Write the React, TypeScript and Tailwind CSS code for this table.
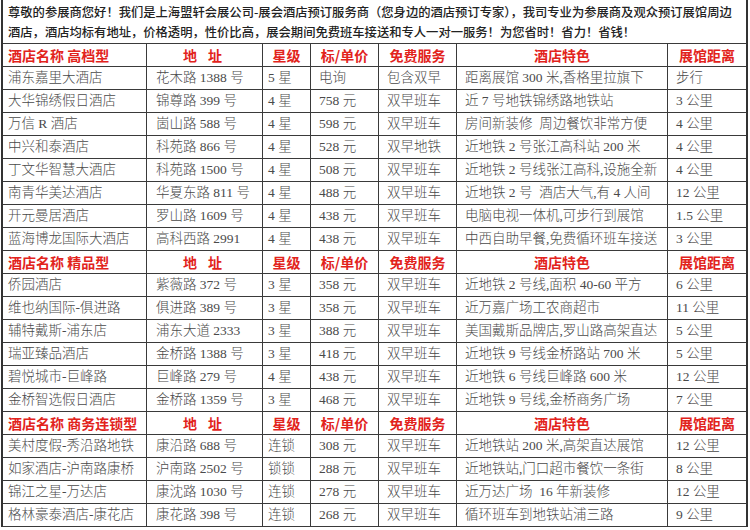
import React from "react";

type Row = [string, string, string, string, string, string, string];

const sections: { title: string; rows: Row[] }[] = [
  {
    title: "酒店名称 高档型",
    rows: [
      ["浦东嘉里大酒店", "花木路 1388 号", "5 星", "电询", "包含双早", "距离展馆 300 米,香格里拉旗下", "步行"],
      ["大华锦绣假日酒店", "锦尊路 399 号", "4 星", "758 元", "双早班车", "近 7 号地铁锦绣路地铁站", "3 公里"],
      ["万信 R 酒店", "崮山路 588 号", "4 星", "598 元", "双早班车", "房间新装修  周边餐饮非常方便", "4 公里"],
      ["中兴和泰酒店", "科苑路 866 号", "4 星", "528 元", "双早地铁", "近地铁 2 号张江高科站 200 米", "4 公里"],
      ["丁文华智慧大酒店", "科苑路 1500 号", "4 星", "508 元", "双早班车", "近地铁 2 号线张江高科,设施全新", "4 公里"],
      ["南青华美达酒店", "华夏东路 811 号", "4 星", "488 元", "双早班车", "近地铁 2 号  酒店大气,有 4 人间", "12 公里"],
      ["开元曼居酒店", "罗山路 1609 号", "4 星", "438 元", "双早班车", "电脑电视一体机,可步行到展馆", "1.5 公里"],
      ["蓝海博龙国际大酒店", "高科西路 2991", "4 星", "438 元", "双早班车", "中西自助早餐,免费循环班车接送", "3 公里"],
    ],
  },
  {
    title: "酒店名称 精品型",
    rows: [
      ["侨园酒店", "紫薇路 372 号", "3 星", "358 元", "双早班车", "近地铁 2 号线,面积 40-60 平方", "6 公里"],
      ["维也纳国际-俱进路", "俱进路 389 号", "3 星", "358 元", "双早班车", "近万嘉广场工农商超市", "11 公里"],
      ["辅特戴斯-浦东店", "浦东大道 2333", "3 星", "388 元", "双早班车", "美国戴斯品牌店,罗山路高架直达", "5 公里"],
      ["瑞亚臻品酒店", "金桥路 1388 号", "3 星", "418 元", "双早班车", "近地铁 9 号线金桥路站 700 米", "5 公里"],
      ["碧悦城市-巨峰路", "巨峰路 279 号", "4 星", "438 元", "双早班车", "近地铁 6 号线巨峰路 600 米", "12 公里"],
      ["金桥智选假日酒店", "金桥路 1359 号", "3 星", "468 元", "双早班车", "近地铁 9 号线,金桥商务广场", "7 公里"],
    ],
  },
  {
    title: "酒店名称 商务连锁型",
    rows: [
      ["美村度假-秀沿路地铁", "康沿路 688 号", "连锁", "308 元", "双早班车", "近地铁站 200 米,高架直达展馆", "12 公里"],
      ["如家酒店-沪南路康桥", "沪南路 2502 号", "锁锁", "288 元", "双早班车", "近地铁站,门口超市餐饮一条街", "8 公里"],
      ["锦江之星-万达店", "康沈路 1030 号", "连锁", "278 元", "双早班车", "近万达广场  16 年新装修", "12 公里"],
      ["格林豪泰酒店-康花店", "康花路 398 号", "连锁", "268 元", "双早班车", "循环班车到地铁站浦三路", "9 公里"],
    ],
  },
];

const dataFont = { fontFamily: '"Liberation Serif", "Noto Sans CJK SC", serif' };

const cellBase = "h-[23px] border-b border-[#3a3a3a] flex items-center overflow-hidden whitespace-pre";
const dataPads = ["pl-[5px]", "pl-[9px]", "pl-[5px]", "pl-[8px]", "pl-[8px]", "pl-[8px]", "pl-[8px]"];

function HeaderRow({ title }: { title: string }) {
  const red = "text-[#e2231c] font-bold text-[14px] [font-family:'Noto_Sans_CJK_SC',sans-serif]";
  return (
    <>
      <div className={`${cellBase} border-r ${red} pl-[5px]`}>{title}</div>
      <div className={`${cellBase} border-r ${red} justify-center gap-[11px] pr-[4px]`}>
        <span>地</span>
        <span>址</span>
      </div>
      <div className={`${cellBase} border-r ${red} justify-center`}>星级</div>
      <div className={`${cellBase} border-r ${red} justify-center`}>标/单价</div>
      <div className={`${cellBase} border-r ${red} justify-center`}>免费服务</div>
      <div className={`${cellBase} border-r ${red} justify-center`}>酒店特色</div>
      <div className={`${cellBase} ${red} justify-center`}>展馆距离</div>
    </>
  );
}

function DataRow({ row }: { row: Row }) {
  return (
    <>
      {row.map((c, i) => (
        <div
          key={i}
          className={`${cellBase} ${i < 6 ? "border-r" : ""} ${dataPads[i]} text-[13.5px] font-light text-[#4a4a4a]`}
          style={dataFont}
        >
          {c}
        </div>
      ))}
    </>
  );
}

export default function App() {
  return (
    <div className="w-[750px] h-[530px] bg-white overflow-hidden">
      <div className="ml-[1px] w-[747px] border-x-2 border-[#333]">
        <div className="h-[43px] pl-[5px] pt-[2px] text-[12.3px] leading-[20px] text-[#222] font-medium whitespace-nowrap [font-family:'Noto_Sans_CJK_SC',sans-serif]">
          <div>尊敬的参展商您好！我们是上海盟轩会展公司-展会酒店预订服务商（您身边的酒店预订专家），我司专业为参展商及观众预订展馆周边</div>
          <div>酒店，酒店均标有地址，价格透明，性价比高，展会期间免费班车接送和专人一对一服务！为您省时！省力！省钱！</div>
        </div>
        <div className="grid grid-cols-[144px_116px_48px_68px_78px_211px_78px] border-t border-[#3a3a3a]">
          {sections.map((s, si) => (
            <React.Fragment key={si}>
              <HeaderRow title={s.title} />
              {s.rows.map((r, ri) => (
                <DataRow key={ri} row={r} />
              ))}
            </React.Fragment>
          ))}
        </div>
      </div>
    </div>
  );
}
